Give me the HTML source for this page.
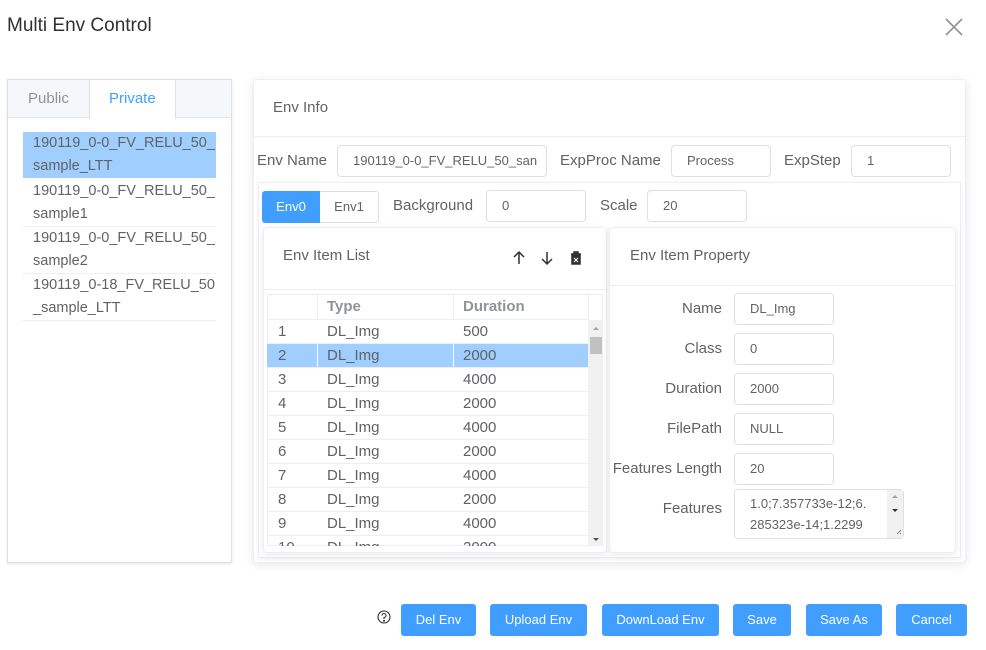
<!DOCTYPE html>
<html><head><meta charset="utf-8"><style>
*{box-sizing:border-box;margin:0;padding:0}
body{width:986px;height:650px;background:#fff;font-family:"Liberation Sans","DejaVu Sans",sans-serif;color:#606266;position:relative;overflow:hidden}
.a{position:absolute}
.t{position:absolute;white-space:nowrap;font-size:15px;color:#606266}
.in{position:absolute;border:1px solid #dcdfe6;border-radius:4px;background:#fff;font-size:13px;color:#606266;padding-left:15px;height:32px;line-height:30px;white-space:nowrap;overflow:hidden}
.btn{position:absolute;top:604px;height:32px;background:#409eff;color:#fff;font-size:13px;border-radius:3px;text-align:center;line-height:32px}
.row{position:absolute;left:267px;width:321px;height:24px;border-bottom:1px solid #ebeef5;font-size:15px;line-height:23px;color:#606266}
.row span{position:absolute}
.lab{position:absolute;width:120px;left:602px;text-align:right;font-size:15px;color:#606266;white-space:nowrap}
.li{position:absolute;left:23px;width:193px;font-size:14.5px;line-height:23px;color:#606266;border-bottom:1px solid #ebeef5;padding-left:10px;white-space:nowrap;overflow:hidden}
</style></head><body>
<div class="t" style="left:7px;top:15px;font-size:19px;color:#303133">Multi Env Control</div>
<svg class="a" style="left:945px;top:18px" width="18" height="18"><path d="M1 1L17 17M17 1L1 17" stroke="#909399" stroke-width="1.6"/></svg>

<div class="a" style="left:7px;top:79px;width:225px;height:484px;border:1px solid #dcdfe6;box-shadow:0 1px 3px rgba(0,0,0,.1)"></div>
<div class="a" style="left:8px;top:80px;width:223px;height:38px;background:#f5f7fa;border-bottom:1px solid #e4e7ed"></div>
<div class="a" style="left:89px;top:80px;width:87px;height:39px;background:#fff;border-left:1px solid #dcdfe6;border-right:1px solid #dcdfe6"></div>
<div class="t" style="left:28px;top:90px;color:#909399">Public</div>
<div class="t" style="left:109px;top:90px;color:#409eff">Private</div>
<div class="li" style="top:132px;height:46px;background:#a0cfff;border-bottom:none">190119_0-0_FV_RELU_50_<br>sample_LTT</div>
<div class="li" style="top:180px;height:47px">190119_0-0_FV_RELU_50_<br>sample1</div>
<div class="li" style="top:227px;height:47px">190119_0-0_FV_RELU_50_<br>sample2</div>
<div class="li" style="top:274px;height:47px">190119_0-18_FV_RELU_50<br>_sample_LTT</div>

<div class="a" style="left:253px;top:79px;width:713px;height:484px;border:1px solid #ebeef5;border-radius:4px;box-shadow:0 2px 10px rgba(0,0,0,.1)"></div>
<div class="t" style="left:273px;top:99px">Env Info</div>
<div class="a" style="left:254px;top:136px;width:711px;height:1px;background:#ebeef5"></div>
<div class="t" style="left:257px;top:152px">Env Name</div>
<div class="in" style="left:337px;top:145px;width:210px">190119_0-0_FV_RELU_50_san</div>
<div class="t" style="left:560px;top:152px">ExpProc Name</div>
<div class="in" style="left:671px;top:145px;width:100px">Process</div>
<div class="t" style="left:784px;top:152px">ExpStep</div>
<div class="in" style="left:851px;top:145px;width:100px">1</div>

<div class="a" style="left:258px;top:182px;width:703px;height:376px;border:1px solid #ebeef5;box-shadow:0 1px 4px rgba(0,0,0,.06)"></div>
<div class="a" style="left:262px;top:191px;width:58px;height:32px;background:#409eff;color:#fff;font-size:13px;line-height:32px;text-align:center;border-radius:3px 0 0 3px">Env0</div>
<div class="a" style="left:320px;top:191px;width:59px;height:32px;border:1px solid #dcdfe6;border-left:none;font-size:13px;line-height:30px;text-align:center;border-radius:0 3px 3px 0">Env1</div>
<div class="t" style="left:393px;top:197px">Background</div>
<div class="in" style="left:486px;top:190px;width:100px">0</div>
<div class="t" style="left:600px;top:197px">Scale</div>
<div class="in" style="left:647px;top:190px;width:100px">20</div>

<div class="a" style="left:263px;top:227px;width:344px;height:326px;border:1px solid #ebeef5;border-radius:4px;box-shadow:0 2px 8px rgba(0,0,0,.08);background:#fff"></div>
<div class="t" style="left:283px;top:247px">Env Item List</div>
<svg class="a" style="left:512px;top:250px" width="72" height="16" fill="none" stroke="#303133" stroke-width="1.5"><path d="M7 14V2M2 7L7 2L12 7"/><path d="M35 2V14M30 9L35 14L40 9"/><path d="M59 4H69M62 4V2H66V4M60 5H68V14H60Z" fill="#303133"/><path d="M62 8L66 12M66 8L62 12" stroke="#fff" stroke-width="1"/></svg>
<div class="a" style="left:264px;top:289px;width:342px;height:1px;background:#ebeef5"></div>
<div class="a" style="left:267px;top:294px;width:336px;height:252px;border:1px solid #ebeef5;overflow:hidden"></div>
<div class="row" style="top:295px;height:25px;font-weight:bold;color:#909399"><span style="left:60px">Type</span><span style="left:196px">Duration</span></div>
<div class="a" style="left:317px;top:295px;width:1px;height:25px;background:#ebeef5"></div>
<div class="a" style="left:453px;top:295px;width:1px;height:25px;background:#ebeef5"></div>
<div class="a" style="left:588px;top:295px;width:1px;height:25px;background:#ebeef5"></div>
<div class="row" style="top:320px"><span style="left:11px">1</span><span style="left:60px">DL_Img</span><span style="left:196px">500</span></div>
<div class="row" style="top:344px;background:#a0cfff"><span style="left:11px">2</span><span style="left:60px">DL_Img</span><span style="left:196px">2000</span></div>
<div class="a" style="left:317px;top:344px;width:1px;height:24px;background:#fff"></div>
<div class="a" style="left:453px;top:344px;width:1px;height:24px;background:#fff"></div>
<div class="row" style="top:368px"><span style="left:11px">3</span><span style="left:60px">DL_Img</span><span style="left:196px">4000</span></div>
<div class="row" style="top:392px"><span style="left:11px">4</span><span style="left:60px">DL_Img</span><span style="left:196px">2000</span></div>
<div class="row" style="top:416px"><span style="left:11px">5</span><span style="left:60px">DL_Img</span><span style="left:196px">4000</span></div>
<div class="row" style="top:440px"><span style="left:11px">6</span><span style="left:60px">DL_Img</span><span style="left:196px">2000</span></div>
<div class="row" style="top:464px"><span style="left:11px">7</span><span style="left:60px">DL_Img</span><span style="left:196px">4000</span></div>
<div class="row" style="top:488px"><span style="left:11px">8</span><span style="left:60px">DL_Img</span><span style="left:196px">2000</span></div>
<div class="row" style="top:512px"><span style="left:11px">9</span><span style="left:60px">DL_Img</span><span style="left:196px">4000</span></div>
<div class="a" style="left:267px;top:536px;width:321px;height:10px;overflow:hidden"><div class="row" style="left:0;top:0"><span style="left:11px">10</span><span style="left:60px">DL_Img</span><span style="left:196px">2000</span></div></div>
<div class="a" style="left:588px;top:320px;width:15px;height:226px;background:#f1f1f1"></div>
<div class="a" style="left:590px;top:337px;width:12px;height:17px;background:#c1c1c1"></div>
<svg class="a" style="left:591px;top:324px" width="10" height="220"><path d="M2 6L5 3L8 6Z" fill="#a3a3a3"/><path d="M2 214L5 217L8 214Z" fill="#505050"/></svg>

<div class="a" style="left:609px;top:227px;width:347px;height:326px;border:1px solid #ebeef5;border-radius:4px;box-shadow:0 2px 8px rgba(0,0,0,.08);background:#fff"></div>
<div class="t" style="left:630px;top:247px">Env Item Property</div>
<div class="a" style="left:610px;top:285px;width:345px;height:1px;background:#ebeef5"></div>
<div class="lab" style="top:300px">Name</div><div class="in" style="left:734px;top:293px;width:100px">DL_Img</div>
<div class="lab" style="top:340px">Class</div><div class="in" style="left:734px;top:333px;width:100px">0</div>
<div class="lab" style="top:380px">Duration</div><div class="in" style="left:734px;top:373px;width:100px">2000</div>
<div class="lab" style="top:420px">FilePath</div><div class="in" style="left:734px;top:413px;width:100px">NULL</div>
<div class="lab" style="top:460px">Features Length</div><div class="in" style="left:734px;top:453px;width:100px">20</div>
<div class="lab" style="top:500px">Features</div>
<div class="in" style="left:734px;top:489px;width:170px;height:50px;line-height:21px;padding-top:3px;white-space:normal;padding-left:15px;padding-right:20px">1.0;7.357733e-12;6.<br>285323e-14;1.2299</div>
<div class="a" style="left:887px;top:490px;width:16px;height:48px;background:#f1f1f1"></div>
<svg class="a" style="left:887px;top:490px" width="16" height="48"><path d="M5 8L8 5L11 8Z" fill="#a3a3a3"/><path d="M5 19L8 22L11 19Z" fill="#303133"/><path d="M14 40L10 44M14 43L13 44" stroke="#888" stroke-width="1"/></svg>

<svg class="a" style="left:377px;top:610px" width="14" height="14" fill="none" stroke="#303133" stroke-width="1.1"><circle cx="7" cy="7" r="6"/><path d="M5 5.5A2 2 0 1 1 7 7.5V9"/><circle cx="7" cy="10.8" r=".5" fill="#303133"/></svg>
<div class="btn" style="left:401px;width:75px">Del Env</div>
<div class="btn" style="left:490px;width:97px">Upload Env</div>
<div class="btn" style="left:602px;width:117px">DownLoad Env</div>
<div class="btn" style="left:733px;width:58px">Save</div>
<div class="btn" style="left:806px;width:76px">Save As</div>
<div class="btn" style="left:896px;width:71px">Cancel</div>
</body></html>
